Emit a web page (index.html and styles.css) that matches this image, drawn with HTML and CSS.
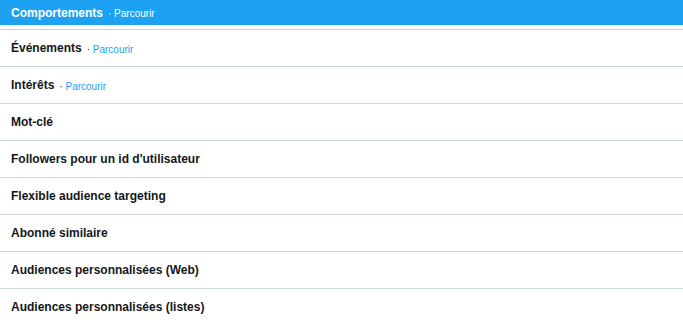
FILE: index.html
```html
<!DOCTYPE html>
<html lang="fr">
<head>
    <meta charset="UTF-8">
    <meta name="viewport" content="width=device-width, initial-scale=1.0">
    <title>Ciblage</title>
    <link rel="stylesheet" href="styles.css">
</head>
<body>
    <ul class="targeting-list">
        <li class="item active">
            <span class="label">Comportements</span>
            <span class="browse">· Parcourir</span>
        </li>
        <li class="item">
            <span class="label">Événements</span>
            <span class="browse">· <a href="#">Parcourir</a></span>
        </li>
        <li class="item">
            <span class="label">Intérêts</span>
            <span class="browse">· <a href="#">Parcourir</a></span>
        </li>
        <li class="item"><span class="label">Mot-clé</span></li>
        <li class="item"><span class="label">Followers pour un id d'utilisateur</span></li>
        <li class="item"><span class="label">Flexible audience targeting</span></li>
        <li class="item"><span class="label">Abonné similaire</span></li>
        <li class="item"><span class="label">Audiences personnalisées (Web)</span></li>
        <li class="item"><span class="label">Audiences personnalisées (listes)</span></li>
    </ul>
</body>
</html>
```

FILE: styles.css
```css
:root {
    --blue: #1da1f2;
    --border: #ccd6dd;
    --text: #14171a;
}
body {
    margin: 0;
    background: #fff;
    font-family: 'Liberation Sans', Arial, sans-serif;
    color: var(--text);
}
.targeting-list {
    list-style: none;
    margin: 0;
    padding: 0;
}
.item {
    display: flex;
    align-items: center;
    gap: 5px;
    height: 36px;
    padding: 0 11px;
    border-top: 1px solid var(--border);
}
.item.active {
    height: 25px;
    border-top: none;
    margin-bottom: 4px;
    background: var(--blue);
    color: #fff;
}
.label {
    font-size: 12px;
    font-weight: bold;
}
.browse {
    font-size: 10px;
    padding-top: 2px;
}
.browse a {
    color: var(--blue);
    text-decoration: none;
}
```
